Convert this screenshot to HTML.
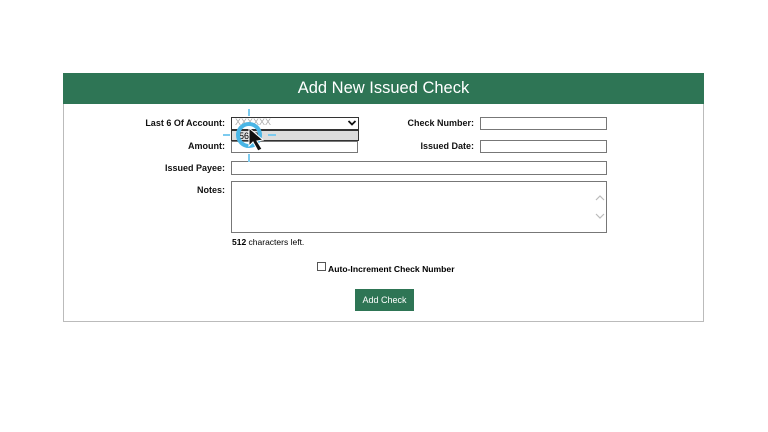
<!DOCTYPE html>
<html><head><style>
body{margin:0;width:768px;height:432px;background:#fff;font-family:"Liberation Sans",sans-serif;position:relative;overflow:hidden}
.a{position:absolute}
.lbl{font-size:9px;font-weight:bold;color:#111;text-align:right;width:120px}
.box{border:1px solid #777;background:#fff;height:12px;box-sizing:border-box}
</style></head><body>
<div class="a" style="left:63px;top:73px;width:641px;height:249px;border:1px solid #bbb;box-sizing:border-box"></div>
<div class="a" style="left:63px;top:73px;width:641px;height:31px;background:#2e7555;color:#fff;font-size:16.5px;text-align:center;line-height:31px">Add New Issued Check</div>
<div class="a lbl" style="left:105px;top:118px">Last 6 Of Account:</div>
<div class="a lbl" style="left:105px;top:141px">Amount:</div>
<div class="a lbl" style="left:105px;top:163px">Issued Payee:</div>
<div class="a lbl" style="left:105px;top:185px">Notes:</div>
<div class="a lbl" style="left:354px;top:118px">Check Number:</div>
<div class="a lbl" style="left:354px;top:141px">Issued Date:</div>
<div class="a box" style="left:231px;top:117px;width:128px;height:13px;border-color:#333"></div>
<div class="a" style="left:235px;top:117px;font-size:9px;color:#aaa">XXXXXX</div>
<svg class="a" style="left:347px;top:119px" width="10" height="8"><path d="M1.5 2 L5 5.5 L8.5 2" fill="none" stroke="#111" stroke-width="1.8"/></svg>
<div class="a" style="left:231px;top:130px;width:128px;height:11px;background:#ddd;border:1px solid #333;box-sizing:border-box;font-size:9px;padding-left:7px;line-height:10px">5678</div>
<div class="a box" style="left:231px;top:141px;width:127px;height:12px"></div>
<div class="a box" style="left:480px;top:117px;width:127px;height:13px"></div>
<div class="a box" style="left:480px;top:140px;width:127px;height:13px"></div>
<div class="a box" style="left:231px;top:161px;width:376px;height:14px"></div>
<div class="a box" style="left:231px;top:181px;width:376px;height:52px"></div>
<svg class="a" style="left:594px;top:192px" width="12" height="30"><path d="M2 8 L6 4 L10 8 M2 22 L6 26 L10 22" fill="none" stroke="#bbb" stroke-width="1.2"/></svg>
<div class="a" style="left:232px;top:237px;font-size:8.5px"><b>512</b> characters left.</div>
<div class="a" style="left:317px;top:262px;width:9px;height:9px;border:1px solid #555;box-sizing:border-box"></div>
<div class="a" style="left:328px;top:264px;font-size:8.6px;font-weight:bold">Auto-Increment Check Number</div>
<div class="a" style="left:355px;top:289px;width:59px;height:22px;background:#2e7555;color:#fff;font-size:9px;text-align:center;line-height:22px">Add Check</div>
<svg class="a" style="left:220px;top:106px" width="60" height="60">
<circle cx="29" cy="29" r="11" fill="none" stroke="#4ab6e6" stroke-width="4"/>
<g stroke="#7dcbef" stroke-width="2"><line x1="29" y1="3" x2="29" y2="10"/><line x1="29" y1="48" x2="29" y2="56"/><line x1="3" y1="29" x2="10" y2="29"/><line x1="48" y1="29" x2="56" y2="29"/></g>
<path d="M29 22 L29 40 L33 36 L38 45 L42 43 L37 35 L43 34 Z" fill="#111" stroke="#fff" stroke-width="1"/>
</svg>
</body></html>
